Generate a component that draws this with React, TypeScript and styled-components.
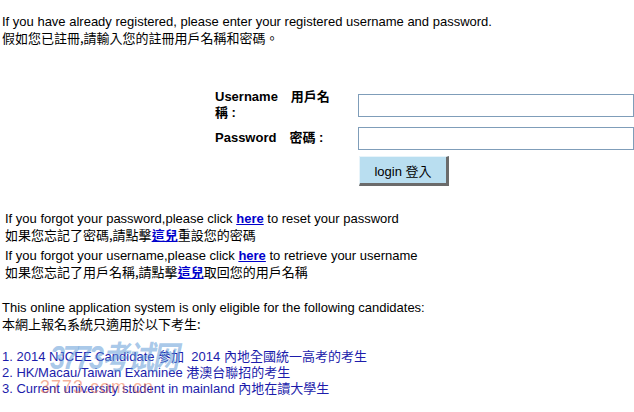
import React from "react";
import styled, { createGlobalStyle } from "styled-components";

const Global = createGlobalStyle`
  html, body { margin: 0; padding: 0; background: #fff; }
  body {
    font-family: "Liberation Sans", Arial, "Noto Sans CJK TC", sans-serif;
    font-size: 13px;
    color: #000;
  }
`;

const Page = styled.div`
  position: relative;
  width: 634px;
  height: 412px;
  overflow: hidden;
  padding-top: 14px;
  box-sizing: border-box;
`;

const Para = styled.div<{ $indent?: number; $mt?: number }>`
  padding-left: ${(p) => p.$indent ?? 2}px;
  margin-top: ${(p) => p.$mt ?? 0}px;
  line-height: 16px;
`;

const Line = styled.div`
  white-space: nowrap;
  height: 16px;
  line-height: 16px;
`;

const Zh = styled.span`
  font-family: "Noto Sans CJK TC", sans-serif;
  font-size: 13px;
  line-height: 16px;
`;

const FormTable = styled.div`
  margin-top: 42px;
  margin-left: 215px;
  display: grid;
  grid-template-columns: 143px 276px;
`;

const Label = styled.div<{ $h: number }>`
  font-weight: bold;
  font-size: 13px;
  line-height: 16px;
  width: 124px;
  height: ${(p) => p.$h}px;
  display: flex;
  align-items: center;
`;

const Cell = styled.div<{ $h: number }>`
  height: ${(p) => p.$h}px;
  display: flex;
  align-items: center;
`;

const TextInput = styled.input`
  box-sizing: border-box;
  width: 276px;
  height: 23px;
  border: 1px solid #7f9db9;
  background: #fff;
  margin: 0;
  padding: 0 3px;
  outline: none;
`;

const LoginButton = styled.button`
  box-sizing: border-box;
  width: 90px;
  height: 30px;
  margin: 0 0 0 1px;
  padding: 0;
  background: #b9def0;
  border-style: solid;
  border-width: 1px 3px 3px 1px;
  border-color: #e8f4fa #6b6b6b #6b6b6b #e8f4fa;
  font-family: "Liberation Sans", Arial, "Noto Sans CJK TC", sans-serif;
  font-size: 13px;
  color: #000;
`;

const Link = styled.a`
  color: #0000cc;
  font-weight: bold;
  text-decoration: underline;
`;

const LinkZh = styled(Link)`
  font-family: "Noto Sans CJK TC", sans-serif;
  font-size: 13px;
  line-height: 16px;
`;

const List = styled.div`
  margin-top: 16px;
  padding-left: 2px;
  color: #1c1cab;
`;

const Watermark = styled.div`
  position: absolute;
  left: 50px;
  top: 340px;
  font-family: "Liberation Sans", "Noto Sans CJK SC", sans-serif;
  font-size: 27px;
  line-height: 30px;
  font-weight: bold;
  font-style: italic;
  color: rgba(95, 155, 215, 0.55);
  letter-spacing: -2px;
  pointer-events: none;
  transform: scaleY(1.2);
  transform-origin: top left;
`;

const WatermarkSub = styled.div`
  position: absolute;
  left: 40px;
  top: 377px;
  font-family: "Liberation Sans", sans-serif;
  font-size: 18px;
  color: rgba(235, 110, 70, 0.55);
  letter-spacing: 1px;
  pointer-events: none;
`;

export default function App() {
  return (
    <>
      <Global />
      <Page>
        <Para>
          <Line>If you have already registered, please enter your registered username and password.</Line>
          <Line><Zh>假如您已註冊,請輸入您的註冊用戶名稱和密碼。</Zh></Line>
        </Para>

        <FormTable>
          <Label $h={34}>Username　用戶名稱 :</Label>
          <Cell $h={34}><TextInput type="text" /></Cell>
          <Label $h={32}>Password　密碼 :</Label>
          <Cell $h={32}><TextInput type="password" /></Cell>
          <div />
          <Cell $h={34}><LoginButton>login 登入</LoginButton></Cell>
        </FormTable>

        <Para $indent={5} $mt={23}>
          <Line>If you forgot your password,please click <Link href="#">here</Link> to reset your password</Line>
          <Line><Zh>如果您忘記了密碼,請點擊</Zh><LinkZh href="#">這兒</LinkZh><Zh>重設您的密碼</Zh></Line>
        </Para>
        <Para $indent={5} $mt={5}>
          <Line>If you forgot your username,please click <Link href="#">here</Link> to retrieve your username</Line>
          <Line><Zh>如果您忘記了用戶名稱,請點擊</Zh><LinkZh href="#">這兒</LinkZh><Zh>取回您的用戶名稱</Zh></Line>
        </Para>

        <Para $mt={20}>
          <Line>This online application system is only eligible for the following candidates:</Line>
          <Line><Zh>本網上報名系統只適用於以下考生:</Zh></Line>
        </Para>

        <List>
          <Line>1. 2014 NJCEE Candidate <Zh>參加</Zh>&nbsp; 2014 <Zh>內地全國統一高考的考生</Zh></Line>
          <Line>2. HK/Macau/Taiwan Examinee <Zh>港澳台聯招的考生</Zh></Line>
          <Line>3. Current university student in mainland <Zh>內地在讀大學生</Zh></Line>
        </List>

        <Watermark>3773考试网</Watermark>
        <WatermarkSub>3773.com.cn</WatermarkSub>
      </Page>
    </>
  );
}
